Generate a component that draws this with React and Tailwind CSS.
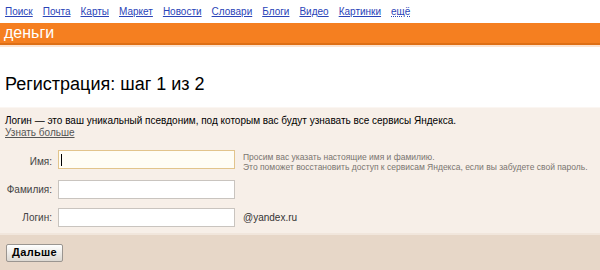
export default function App() {
  const links = ["Поиск", "Почта", "Карты", "Маркет", "Новости", "Словари", "Блоги", "Видео", "Картинки"];
  return (
    <div className="w-[600px] h-[270px] overflow-hidden bg-white flex flex-col" style={{ fontFamily: '"Liberation Sans", Arial, sans-serif' }}>
      <div className="h-[23px] flex items-center gap-[10px] pl-[5px] text-[10px] shrink-0">
        {links.map((l) => (
          <a key={l} className="text-[#2a44b8] underline">{l}</a>
        ))}
        <a className="text-[#2a44b8] underline decoration-dotted">ещё</a>
      </div>
      <div className="h-[22px] bg-[#f57f20] border-b-[2px] border-[#de6f15] flex items-center pl-[4px] text-white text-[16px] shrink-0">
        деньги
      </div>
      <div className="h-[2px] bg-[#fce3d0] shrink-0"></div>
      <div className="h-[60px] pt-[26px] pl-[5px] text-[18px] leading-[22px] text-black shrink-0">
        Регистрация: шаг 1 из 2
      </div>
      <div className="h-[126px] shrink-0 bg-[#f7efe8] border-t border-[#fbf6f2] pt-[7px] text-[10px] text-black">
        <div className="pl-[5px] leading-[12px] whitespace-nowrap">
          Логин — это ваш уникальный псевдоним, под которым вас будут узнавать все сервисы Яндекса.
        </div>
        <div className="pl-[5px] leading-[12px]">
          <a className="text-[#555] underline">Узнать больше</a>
        </div>
        <div className="mt-[11px] flex flex-col">
          <div className="flex items-start h-[19px]">
            <div className="w-[52px] shrink-0 text-right text-[10px] text-[#444] pt-[4px]">Имя:</div>
            <div className="ml-[6px] shrink-0 w-[177px] h-[19px] border border-[#e2c48c] bg-[#fffdf5] flex items-center pl-[2px]">
              <div className="w-[1px] h-[12px] bg-black"></div>
            </div>
            <div className="ml-[8px] whitespace-nowrap text-[8.5px] leading-[10px] text-[#7a7570] pt-[2px]">
              <div>Просим вас указать настоящие имя и фамилию.</div>
              <div>Это поможет восстановить доступ к сервисам Яндекса, если вы забудете свой пароль.</div>
            </div>
          </div>
          <div className="mt-[11px] flex items-center h-[19px]">
            <div className="w-[52px] shrink-0 text-right text-[10px] text-[#444]">Фамилия:</div>
            <div className="ml-[6px] shrink-0 w-[177px] h-[19px] border border-[#c9c4bf] bg-white"></div>
          </div>
          <div className="mt-[9px] flex items-center h-[19px]">
            <div className="w-[52px] shrink-0 text-right text-[10px] text-[#444]">Логин:</div>
            <div className="ml-[6px] shrink-0 w-[177px] h-[19px] border border-[#c9c4bf] bg-white"></div>
            <div className="ml-[8px] text-[10px] text-[#333]">@yandex.ru</div>
          </div>
        </div>
      </div>
      <div className="flex-1 bg-[#e7d7c8] border-t-[2px] border-[#f1e6dc] flex items-center pl-[6px]">
        <button className="w-[57px] h-[18px] border border-[#9a9590] rounded-[2px] bg-gradient-to-b from-white to-[#dcd8d2] text-[11px] font-bold text-black leading-none tracking-[0.3px]">
          Дальше
        </button>
      </div>
    </div>
  );
}
